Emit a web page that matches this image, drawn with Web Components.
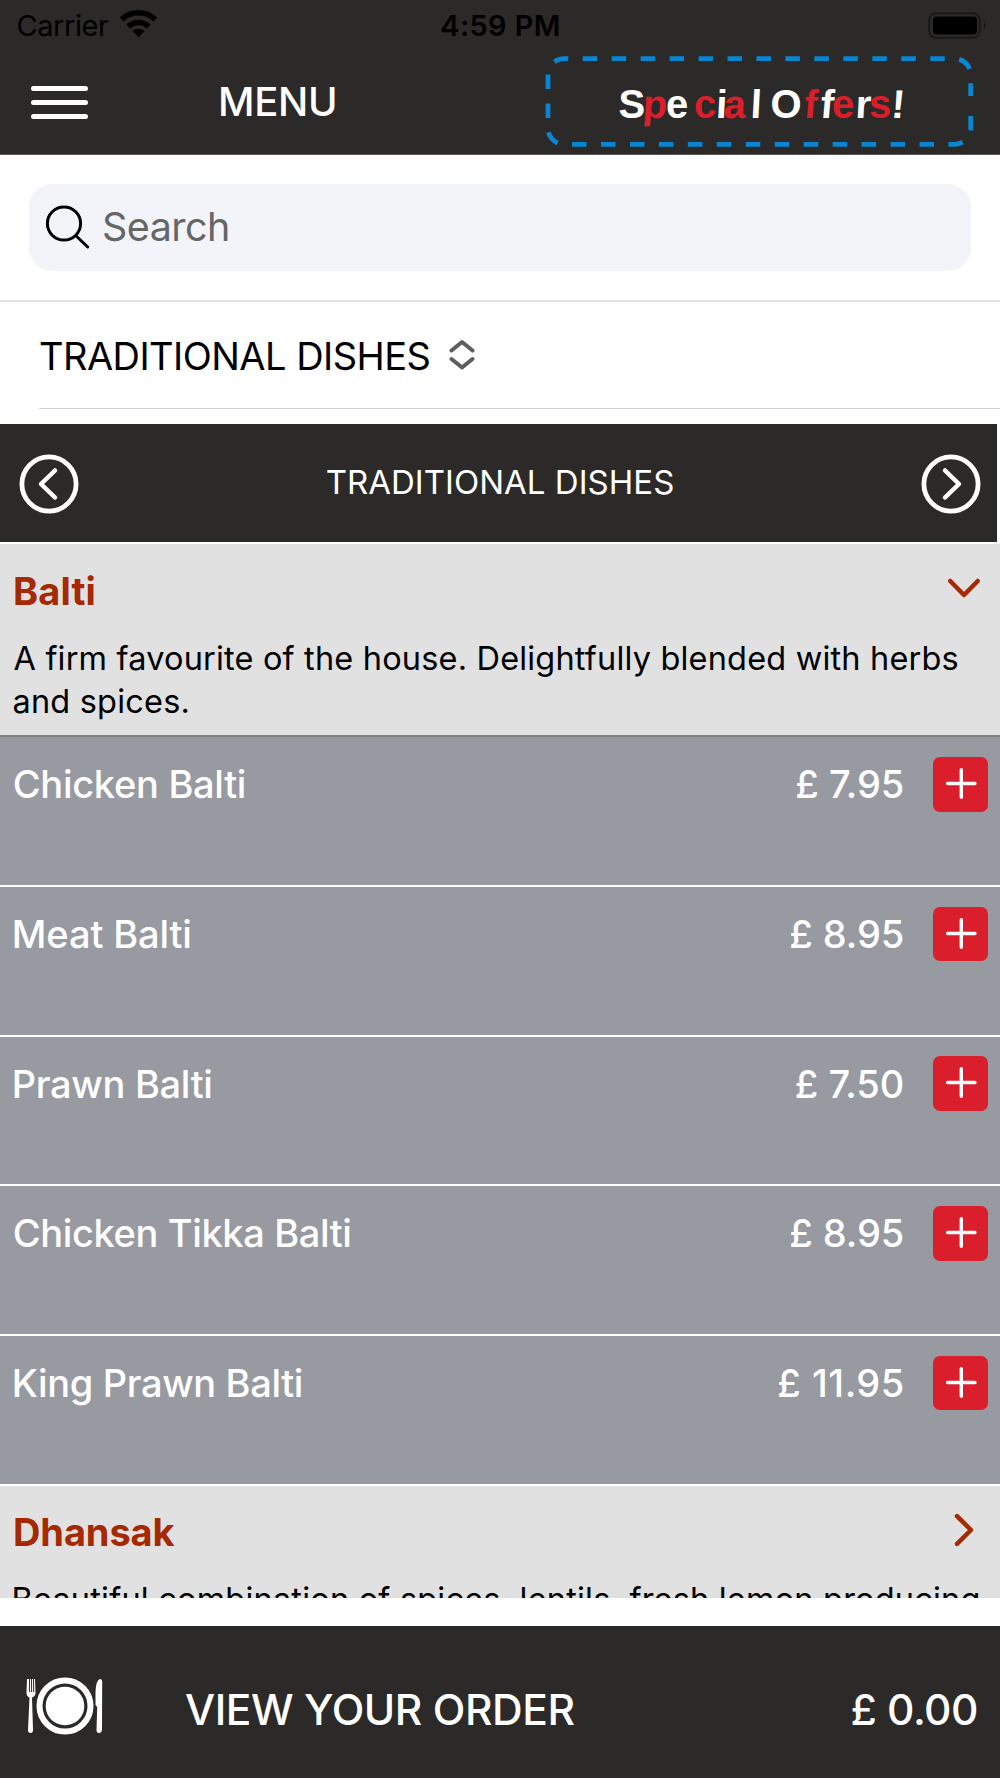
<!DOCTYPE html>
<html lang="en">
<head>
<meta charset="utf-8">
<title>Menu</title>
<style>
  body {
    margin: 0;
    width: 1000px;
    height: 1778px;
    overflow: hidden;
    background: #fff;
    font-family: Inter, "Liberation Sans", sans-serif;
    color: #000;
  }
</style>
</head>
<body>
<menu-app>
  <app-header slot="header"></app-header>
  <search-box slot="search"></search-box>
  <category-select slot="search"></category-select>
  <category-bar></category-bar>
  <dish-group open>
    <fit-text slot="title" width="79.5">Balti</fit-text>
    <fit-text slot="text" width="944">A firm favourite of the house. Delightfully blended with herbs</fit-text>
    <fit-text slot="text" width="174">and spices.</fit-text>
    <dish-row slot="dishes"><fit-text width="230">Chicken Balti</fit-text><fit-text slot="price" width="106.5">£ 7.95</fit-text></dish-row>
    <dish-row slot="dishes"><fit-text width="175.5">Meat Balti</fit-text><fit-text slot="price" width="112.5">£ 8.95</fit-text></dish-row>
    <dish-row slot="dishes"><fit-text width="196.5">Prawn Balti</fit-text><fit-text slot="price" width="107">£ 7.50</fit-text></dish-row>
    <dish-row slot="dishes"><fit-text width="335.5">Chicken Tikka Balti</fit-text><fit-text slot="price" width="112.5">£ 8.95</fit-text></dish-row>
    <dish-row slot="dishes"><fit-text width="287">King Prawn Balti</fit-text><fit-text slot="price" width="124.5">£ 11.95</fit-text></dish-row>
  </dish-group>
  <dish-group>
    <fit-text slot="title" width="159.5">Dhansak</fit-text>
    <fit-text slot="text" width="965">Beautiful combination of spices, lentils, fresh lemon producing</fit-text>
  </dish-group>
  <order-bar slot="footer"></order-bar>
</menu-app>

<script>
class MenuApp extends HTMLElement {
  constructor() {
    super();
    this.attachShadow({ mode: 'open' }).innerHTML = `
      <style>
        :host { display: flex; flex-direction: column; height: 1778px; }
        .list { height: 1173.7px; overflow: hidden; }
        .footer { margin-top: auto; }
      </style>
      <slot name="header"></slot>
      <slot name="search"></slot>
      <div class="list"><slot></slot></div>
      <div class="footer"><slot name="footer"></slot></div>
    `;
  }
}

class AppHeader extends HTMLElement {
  constructor() {
    super();
    this.attachShadow({ mode: 'open' }).innerHTML = `
      <style>
        :host { display: block; height: 155px; background: #2b2a28; border-bottom: 1px solid #5b5a59; box-sizing: border-box; flex: none; }
        svg { display: block; flex: none; }
        .status { display: grid; grid-template-columns: 1fr auto 1fr; align-items: center; height: 50px; color: #000; font-size: 29px; }
        .left { display: flex; align-items: center; gap: 11px; padding-left: 17.5px; }
        .left svg { margin-top: -2px; }
        .time { font-weight: 600; }
        .battery { justify-self: end; padding-right: 12px; }
        .nav { display: flex; align-items: center; height: 103px; }
        .burger { margin: 2px 0 0 30.5px; }
        .title { margin: 0 0 0 133.5px; color: #fff; font-size: 40px; font-weight: 550; }
        .offers { margin-left: 210.5px; }
      </style>
      <div class="status">
        <div class="left">
          <fit-text width="91.5">Carrier</fit-text>
          <svg width="37" height="28" viewBox="0 0 37 28">
            <g fill="none" stroke="#000" stroke-width="5.6">
              <path d="M1.7 9.6a24.2 24.2 0 0 1 33.6 0"/>
              <path d="M8.3 16.6a14.6 14.6 0 0 1 20.4 0"/>
            </g>
            <path d="M12.7 21a8.3 8.3 0 0 1 11.600 0L18.5 27.200z"/>
          </svg>
        </div>
        <fit-text class="time" width="117.5">4:59 PM</fit-text>
        <svg class="battery" width="60" height="27" viewBox="0 0 60 27">
          <rect x="1.2" y="1.2" width="50.6" height="24.6" rx="7" fill="none" stroke="#191918" stroke-width="2"/>
          <rect x="5" y="4.5" width="44" height="18" rx="4"/>
          <path d="M56 9q3.5 4.5 0 9z" fill="#191918"/>
        </svg>
      </div>
      <div class="nav">
        <svg class="burger" width="57" height="33" viewBox="0 0 57 33">
          <path d="M2.5 2.5h52M2.5 16.5h52M2.5 30.5h52" stroke="#fff" stroke-width="5" stroke-linecap="round"/>
        </svg>
        <fit-text class="title" width="114">MENU</fit-text>
        <special-offers class="offers"></special-offers>
      </div>
    `;
  }
}

class SpecialOffers extends HTMLElement {
  constructor() {
    super();
    // letter, x, skew angle, colour
    const letters = [
      ['S', 72.5, 0, '#fff'], ['p', 96, -4, '#db1e2b'], ['e', 120, 0, '#fff'],
      ['c', 148, 0, '#db1e2b'], ['i', 169.5, -3, '#fff'], ['a', 177, -3, '#db1e2b'],
      ['l', 204, -3, '#fff'], ['O', 224.5, 0, '#fff'], ['f', 257, -5, '#db1e2b'],
      ['f', 273.5, -5, '#fff'], ['e', 286, 0, '#db1e2b'], ['r', 309, -3, '#fff'],
      ['s', 323, 0, '#db1e2b'], ['!', 344.5, -5, '#fff']
    ];
    this.attachShadow({ mode: 'open' }).innerHTML = `
      <style>
        :host { display: block; flex: none; }
        svg { display: block; overflow: visible; }
        text { font: 700 40px "Liberation Sans", sans-serif; }
      </style>
      <svg width="428" height="91" viewBox="0 0 428 91">
        <path d="M425.2 60v12.3a16 16 0 0 1-16 16H18.5a16 16 0 0 1-16-16V18.7a16 16 0 0 1 16-16h390.7a16 16 0 0 1 16 16V40"
          transform="translate(-.5 0)" fill="none" stroke="#0a85d1" stroke-width="4.8" stroke-dasharray="14.5 14.46"/>
        ${letters.map(([c, x, skew, fill]) =>
          `<text transform="translate(${x} 61.5) skewX(${skew})" fill="${fill}">${c}</text>`).join('')}
      </svg>
    `;
  }
}

class SearchBox extends HTMLElement {
  constructor() {
    super();
    this.attachShadow({ mode: 'open' }).innerHTML = `
      <style>
        :host { display: block; flex: none; padding: 29px; border-bottom: 2px solid #e1e1e1; }
        .field { display: flex; align-items: center; height: 87px; border-radius: 23px; background: #f3f4f9; color: #666; font-size: 39.5px; }
        svg { margin: 0 14px 0 16px; }
        fit-text { margin-top: -2px; }
      </style>
      <div class="field">
        <svg width="45" height="45" viewBox="0 0 45 45">
          <g fill="none" stroke="#000" stroke-width="3" stroke-linecap="round"><circle cx="19" cy="18.5" r="16.6"/><path d="M31.2 31l11.5 11"/></g>
        </svg>
        <fit-text width="124">Search</fit-text>
      </div>
    `;
  }
}

class CategorySelect extends HTMLElement {
  constructor() {
    super();
    this.attachShadow({ mode: 'open' }).innerHTML = `
      <style>
        :host { display: flex; flex: none; align-items: center; gap: 19px; box-sizing: border-box; height: 107px; margin: 0 0 15px 39px; padding-left: 1px; border-bottom: 1px solid #d0d0d0; font-size: 38px; }
        fit-text { margin-top: 2px; }
      </style>
      <fit-text width="389.5">TRADITIONAL DISHES</fit-text>
      <svg width="26" height="32" viewBox="0 0 26 32">
        <path d="M2.5 11.5L13 3l10.5 8.5M2.5 20L13 28.5l10.5-8.5" fill="none" stroke="#5e5e5e" stroke-width="4" stroke-linecap="round" stroke-linejoin="round"/>
      </svg>
    `;
  }
}

class CategoryBar extends HTMLElement {
  constructor() {
    super();
    this.attachShadow({ mode: 'open' }).innerHTML = `
      <style>
        :host { display: flex; align-items: center; justify-content: space-between; box-sizing: border-box; width: 997.3px; height: 118px; padding: 0 16px 0 18.5px; margin-bottom: 2px; background: #2b2a28; color: #fff; font-size: 33px; }
        svg { margin-top: 2px; }
        fit-text { margin-top: -2px; }
      </style>
      <svg width="60" height="60" viewBox="0 0 60 60" fill="none" stroke="#fff">
        <circle cx="30" cy="30" r="27.1" stroke-width="4.8"/>
        <path d="M36 16.5L22 30l14 13.5" stroke-width="4.5" stroke-linecap="round" stroke-linejoin="round"/>
      </svg>
      <fit-text width="346.5">TRADITIONAL DISHES</fit-text>
      <svg width="60" height="60" viewBox="0 0 60 60" fill="none" stroke="#fff">
        <circle cx="30" cy="30" r="27.1" stroke-width="4.8"/>
        <path d="M24 16.5L38 30 24 43.5" stroke-width="4.5" stroke-linecap="round" stroke-linejoin="round"/>
      </svg>
    `;
  }
}

class DishGroup extends HTMLElement {
  constructor() {
    super();
    this.attachShadow({ mode: 'open' }).innerHTML = `
      <style>
        :host { display: block; }
        .head { height: 191px; box-sizing: border-box; padding: 24px 14px 0 13.5px; background: #e1e1e1; }
        .title { display: flex; align-items: center; justify-content: space-between; height: 45px; padding-left: 1.5px; color: #a52a03; font-size: 38px; font-weight: 700; }
        .title svg { margin: -5px 5px 0 0; }
        :host([open]) svg { transform: rotate(90deg); }
        .text { font-size: 32.5px; line-height: 43.5px; margin-top: 23.5px; }
        :host([open]) .dishes::before { content: ""; display: block; height: 2.3px; background: #82827f; }
      </style>
      <div class="head">
        <div class="title">
          <slot name="title"></slot>
          <svg width="34" height="34" viewBox="0 0 34 34">
            <path d="M10 3.2L24 17 10 30.8" fill="none" stroke="#a52a03" stroke-width="4.5" stroke-linecap="round" stroke-linejoin="round"/>
          </svg>
        </div>
        <div class="text"><slot name="text"></slot></div>
      </div>
      <div class="dishes"><slot name="dishes"></slot></div>
    `;
  }
}

class DishRow extends HTMLElement {
  constructor() {
    super();
    this.attachShadow({ mode: 'open' }).innerHTML = `
      <style>
        :host { display: flex; align-items: flex-start; box-sizing: border-box; height: 149.7px; border-bottom: 2px solid #fff; background: #989aa2; color: #fff; font-size: 38px; font-weight: 500; }
        .line { display: flex; flex: 1; align-items: center; height: 54.7px; margin-top: 19.7px; padding: 0 12px 0 14.8px; }
        .price { margin-left: auto; margin-right: 30.5px; }
        .add { width: 54.7px; height: 54.7px; border-radius: 7px; background: #db1e2b; }
        svg { display: block; }
      </style>
      <div class="line">
        <slot></slot>
        <div class="price"><slot name="price"></slot></div>
        <div class="add">
          <svg width="55" height="55" viewBox="0 0 55 55"><path d="M14.6 26.5h27.4M28.3 12.8v27.4" stroke="#fff" stroke-width="3.4" stroke-linecap="round"/></svg>
        </div>
      </div>
    `;
  }
}

class OrderBar extends HTMLElement {
  constructor() {
    super();
    this.attachShadow({ mode: 'open' }).innerHTML = `
      <style>
        :host { display: flex; align-items: center; box-sizing: border-box; height: 152.5px; padding: 15px 23px 0 25px; background: #2b2a28; color: #fff; font-size: 42.5px; font-weight: 500; }
        svg { margin: -6px 83px 0 0; }
        .total { margin-left: auto; }
      </style>
      <svg width="78" height="60" viewBox="0 0 78 60" fill="#fff">
        <circle cx="40" cy="30" r="25.5" fill="none" stroke="#fff" stroke-width="6"/>
        <circle cx="40" cy="30" r="19.3"/>
        <path d="M2 3L1.5 17q0 3 3 4.5L3 54q0 3 2.5 3t2.5-3L7 21.5q3.5-1.5 3.5-4.5L10 3h-1l.2 13h-1L8 3H7l.1 13h-1L6 3H5l-.1 13h-1L4 3z"/>
        <path d="M75 3q-4 1-4.5 13L70.5 29l1.7 2L71.5 54q0 3 2.500 3t3-3L77.200 6q0-3-2.200-3z"/>
      </svg>
      <fit-text width="388.5">VIEW YOUR ORDER</fit-text>
      <fit-text class="total" width="124.5">£ 0.00</fit-text>
    `;
  }
}

// One line of text, tracked so that its ink spans exactly the given width.
class FitText extends HTMLElement {
  constructor() {
    super();
    this.attachShadow({ mode: 'open' }).innerHTML = `
      <style>
        :host { display: block; flex: none; white-space: nowrap; }
        span { display: block; width: max-content; }
      </style>
      <span><slot></slot></span>
    `;
  }

  connectedCallback() {
    const text = this.textContent;
    const width = Number(this.getAttribute('width'));
    const style = getComputedStyle(this);
    const ctx = document.createElement('canvas').getContext('2d');
    ctx.font = `${style.fontWeight} ${style.fontSize} ${style.fontFamily}`;
    const box = ctx.measureText(text);
    const ink = box.actualBoundingBoxLeft + box.actualBoundingBoxRight;
    const line = this.shadowRoot.querySelector('span');
    line.style.letterSpacing = `${(width - ink) / (text.length - 1)}px`;
    line.style.marginLeft = `${box.actualBoundingBoxLeft}px`;
    this.style.width = `${width}px`;
  }
}

customElements.define('menu-app', MenuApp);
customElements.define('app-header', AppHeader);
customElements.define('special-offers', SpecialOffers);
customElements.define('search-box', SearchBox);
customElements.define('category-select', CategorySelect);
customElements.define('category-bar', CategoryBar);
customElements.define('dish-group', DishGroup);
customElements.define('dish-row', DishRow);
customElements.define('order-bar', OrderBar);
customElements.define('fit-text', FitText);
</script>
</body>
</html>
